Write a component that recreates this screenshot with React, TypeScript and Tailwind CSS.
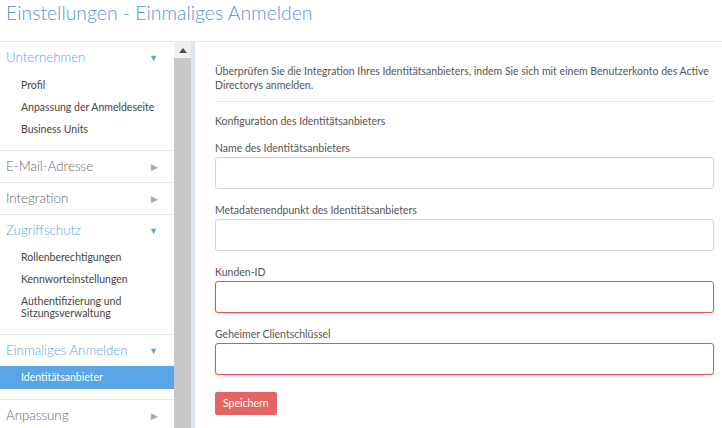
import { ReactNode } from 'react'

const blue = 'text-[#5aa5e6]'

function GroupHeader({ label, open }: { label: string; open?: boolean }) {
  return (
    <div className={`flex items-center justify-between h-[31px] pl-[6px] pr-[16px] text-[13.3px] font-light ${open ? blue : 'text-[#666]'}`}>
      <span>{label}</span>
      <span className={`text-[9px] ${open ? 'text-[#5aa5e6]' : 'text-[#aaa]'}`}>{open ? '▼' : '▶'}</span>
    </div>
  )
}

function SubItem({ children, active }: { children: ReactNode; active?: boolean }) {
  return (
    <div
      className={`pl-[21px] pr-2 text-[10.5px] ${
        active ? 'bg-[#5aa5e6] text-white py-[5px] leading-[13px]' : 'text-[#444] py-[5px] leading-[12px]'
      }`}
    >
      {children}
    </div>
  )
}

function Field({ label, error }: { label: string; error?: boolean }) {
  return (
    <div className="mb-[14px]">
      <div className="text-[10.5px] leading-[14px] text-[#555] mb-[2px]">{label}</div>
      <div
        className={`h-[32px] rounded-[3px] border bg-white ${
          error ? 'border-[#e05555] shadow-[0_1px_2px_rgba(224,85,85,0.25)]' : 'border-[#d4d4d4] shadow-[inset_0_1px_1px_rgba(0,0,0,0.04)]'
        }`}
      />
    </div>
  )
}

export default function App() {
  return (
    <div className="w-[722px] h-[428px] overflow-hidden bg-white font-['Lato',sans-serif]">
      <div className="h-[42px] border-b border-[#e6e6e6] pl-[6px] pt-[1px] text-[19.4px] leading-[24px] font-light text-[#5b93cf]">
        Einstellungen - Einmaliges Anmelden
      </div>

      <div className="flex h-[386px]">
        {/* Sidebar */}
        <div className="w-[174px] overflow-hidden">
          <div className="h-[32px] flex items-center justify-between pl-[6px] pr-[16px] text-[13.3px] font-light text-[#5aa5e6]">
            <span>Unternehmen</span>
            <span className="text-[9px]">▼</span>
          </div>
          <div className="pb-[10px] border-b border-[#e3e6ea]">
            <SubItem>Profil</SubItem>
            <SubItem>Anpassung der Anmeldeseite</SubItem>
            <SubItem>Business Units</SubItem>
          </div>
          <div className="border-b border-[#e3e6ea]">
            <GroupHeader label="E-Mail-Adresse" />
          </div>
          <div className="border-b border-[#e3e6ea]">
            <GroupHeader label="Integration" />
          </div>
          <GroupHeader label="Zugriffschutz" open />
          <div className="pb-[10px] border-b border-[#e3e6ea]">
            <SubItem>Rollenberechtigungen</SubItem>
            <SubItem>Kennworteinstellungen</SubItem>
            <SubItem>
              Authentifizierung und
              <br />
              Sitzungsverwaltung
            </SubItem>
          </div>
          <GroupHeader label="Einmaliges Anmelden" open />
          <div className="pb-[10px] border-b border-[#e3e6ea]">
            <SubItem active>Identitätsanbieter</SubItem>
          </div>
          <GroupHeader label="Anpassung" />
        </div>

        {/* Scrollbar */}
        <div className="w-[17px] flex flex-col bg-[#c8c8c8]">
          <div className="h-[16px] bg-[#f1f1f1] flex items-center justify-center">
            <svg width="8" height="5" viewBox="0 0 8 5">
              <path d="M0 5 L4 0 L8 5 Z" fill="#505050" />
            </svg>
          </div>
        </div>
        <div className="w-[4px] bg-[#dfe5ec]" />

        {/* Content */}
        <div className="flex-1 pl-[20px] pr-[8px] pt-[22px]">
          <p className="text-[10.5px] leading-[14px] text-[#555]">
            Überprüfen Sie die Integration Ihres Identitätsanbieters, indem Sie sich mit einem Benutzerkonto des Active
            Directorys anmelden.
          </p>
          <div className="mt-[9px] border-t border-[#e6e6e6]" />
          <div className="mt-[12px] text-[10.5px] leading-[14px] text-[#555]">Konfiguration des Identitätsanbieters</div>
          <div className="mt-[13px]">
            <Field label="Name des Identitätsanbieters" />
            <Field label="Metadatenendpunkt des Identitätsanbieters" />
            <Field label="Kunden-ID" error />
            <Field label="Geheimer Clientschlüssel" error />
          </div>
          <button className="mt-[3px] h-[23px] px-[8px] rounded-[2px] bg-[#e36464] text-white text-[10.5px]">
            Speichern
          </button>
        </div>
      </div>
    </div>
  )
}
